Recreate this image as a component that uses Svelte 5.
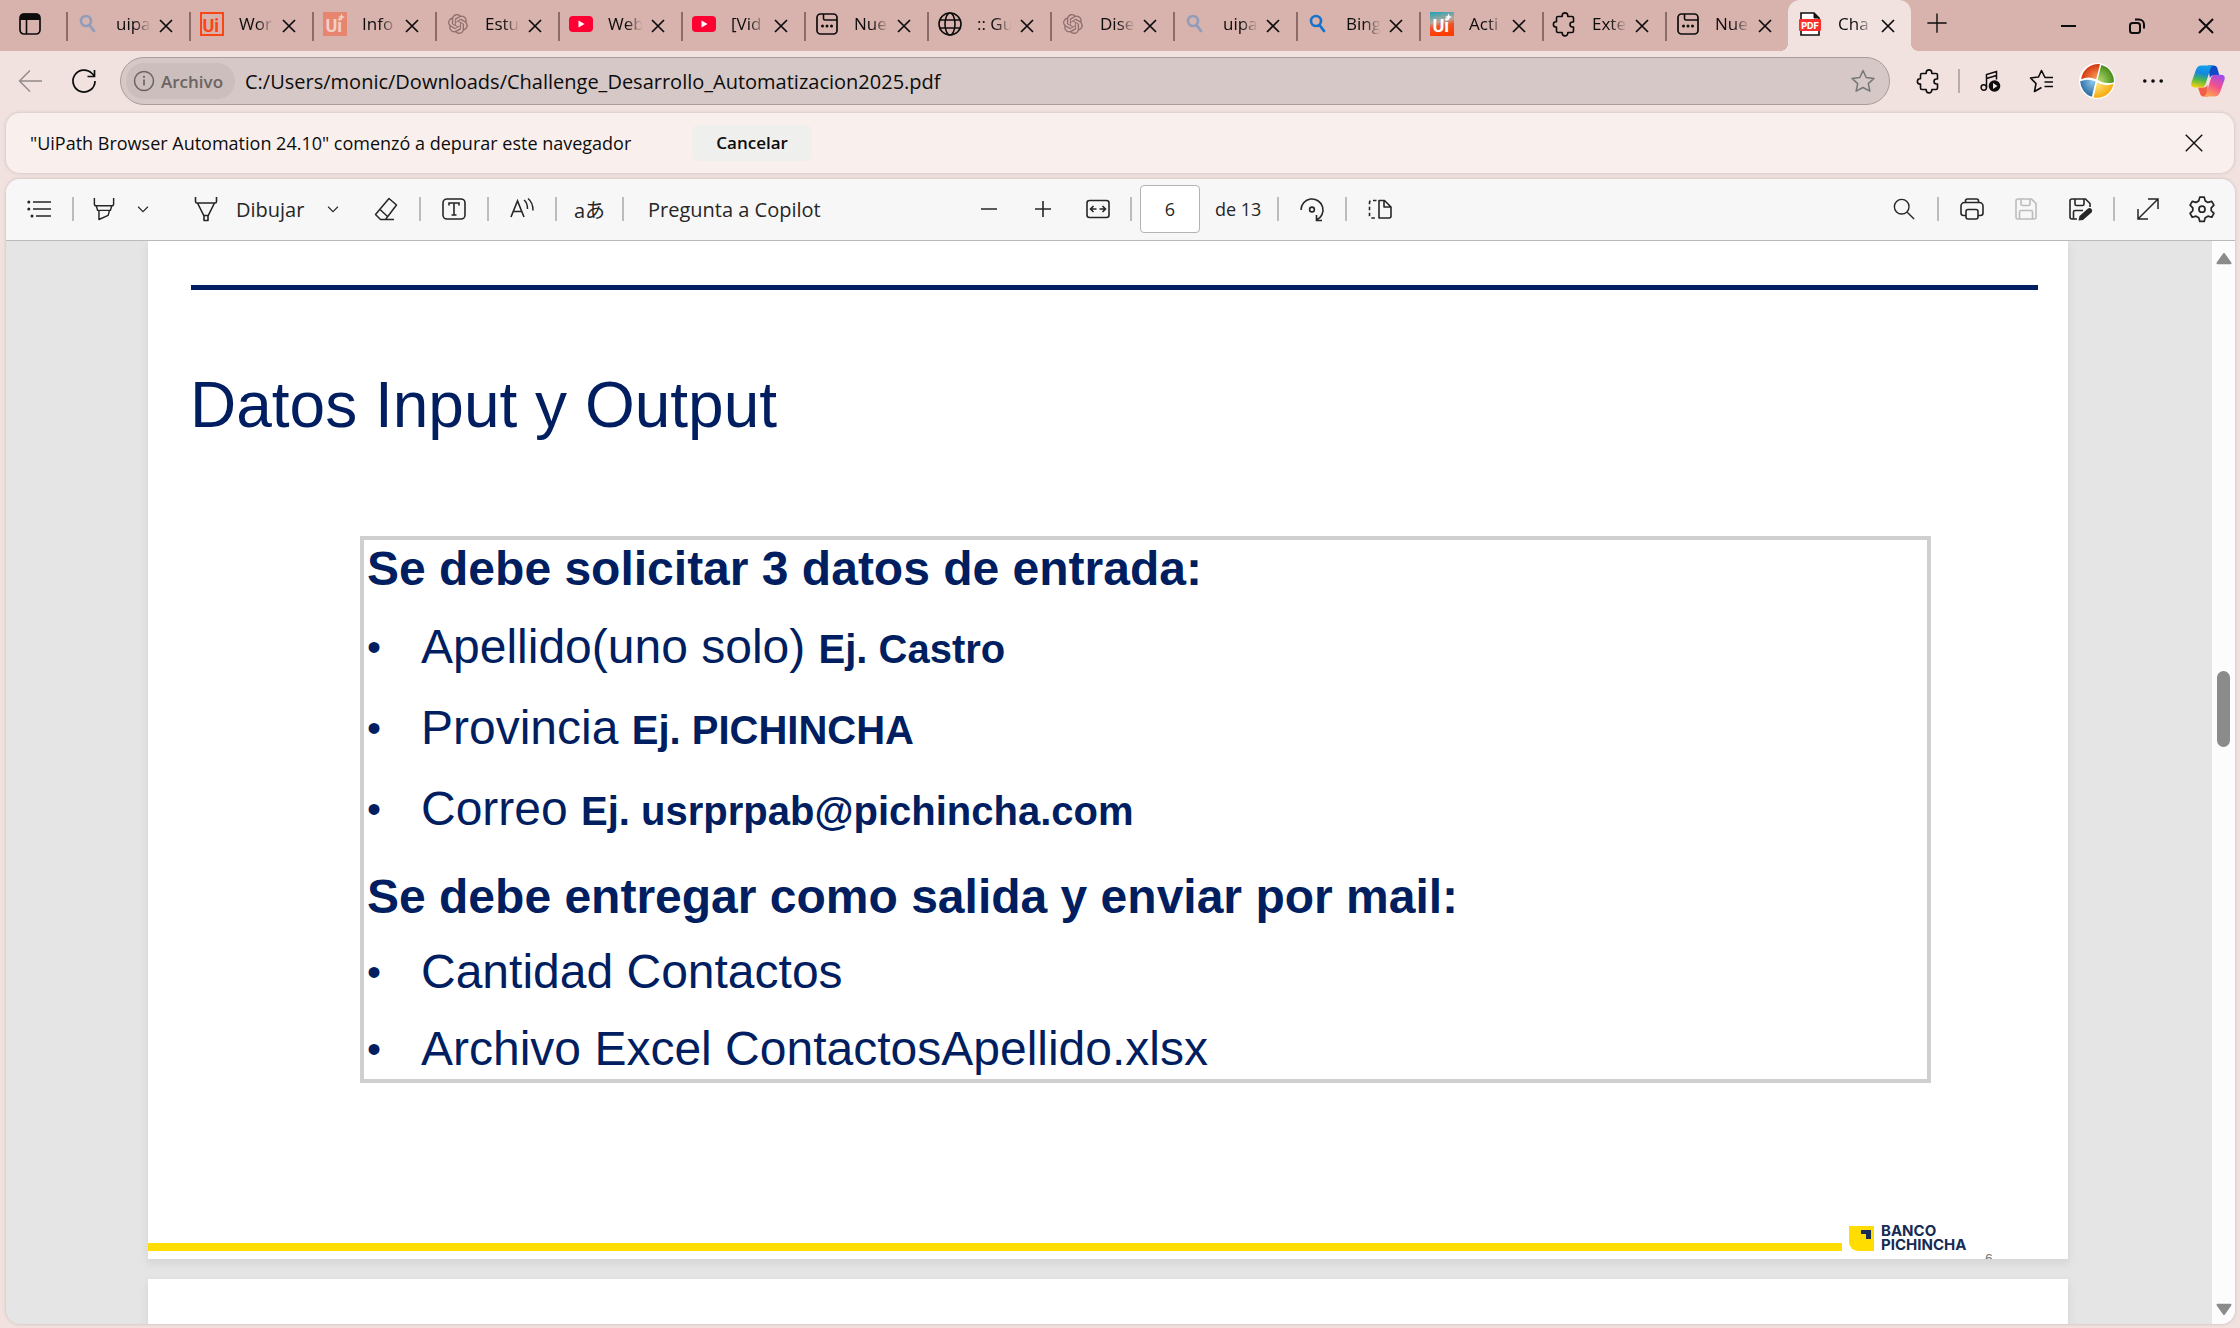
<script>
  const searchGlyph = '<circle cx="9" cy="9" r="5" fill="none" stroke="currentColor" stroke-width="2.6"/><path d="M12.500 13L17 19" stroke="currentColor" stroke-width="2.8" stroke-linecap="round"/>';
  const puzzleGlyph = '<path d="M5 4.500h4.200v-.8a2.800 2.800 0 0 1 5.600 0v.8H19a1.500 1.500 0 0 1 1.500 1.500v4h-1a2.500 2.500 0 0 0 0 5h1v4a1.500 1.500 0 0 1-1.500 1.500h-4.200v.6a2.800 2.800 0 0 1-5.600 0v-.6H5A1.500 1.500 0 0 1 3.500 19v-4H3a2.600 2.600 0 0 1 0-5.200h.5V6A1.500 1.500 0 0 1 5 4.500z" fill="none" stroke="currentColor" stroke-width="1.600" stroke-linejoin="round"/>';
  const uiText = (fill, star) =>
    `<text x="2.500" y="20" font-family="Roboto, sans-serif" font-weight="700" font-size="18" fill="${fill}">Ui</text>${star ? `<path d="M18.500 1.500l1 2.500 2.500 1-2.500 1-1 2.500-1-2.500-2.500-1 2.500-1z" fill="${fill}"/>` : ''}`;

  const icons = {
    search: searchGlyph,
    uiOutline: '<rect x="1" y="1" width="22" height="22" fill="none" stroke="#fa4616" stroke-width="2"/>' + uiText('#fa4616', false),
    uiFaded: '<rect width="24" height="24" fill="#e6866e"/>' + uiText('#f2cfc7', true),
    uiColor: '<defs><linearGradient id="uig" x1="0" y1="0" x2="0.200" y2="1"><stop offset="0" stop-color="#1aa3b8"/><stop offset="0.450" stop-color="#b9a79a"/><stop offset="0.650" stop-color="#f0512a"/><stop offset="1" stop-color="#ff3c00"/></linearGradient></defs><rect width="24" height="24" fill="url(#uig)"/>' + uiText('#fff', true),
    openai: '<path transform="translate(2 2) scale(.83)" fill="#8e6e6c" d="M22.2819 9.8211a5.9847 5.9847 0 0 0-.5157-4.9108 6.0462 6.0462 0 0 0-6.5098-2.9A6.0651 6.0651 0 0 0 4.9807 4.1818a5.9847 5.9847 0 0 0-3.9977 2.9 6.0462 6.0462 0 0 0 .7427 7.0966 5.98 5.98 0 0 0 .511 4.9107 6.051 6.051 0 0 0 6.5146 2.9001A5.9847 5.9847 0 0 0 13.2599 24a6.0557 6.0557 0 0 0 5.7718-4.2058 5.9894 5.9894 0 0 0 3.9977-2.9001 6.0557 6.0557 0 0 0-.7475-7.0729zm-9.022 12.6081a4.4755 4.4755 0 0 1-2.8764-1.0408l.1419-.0804 4.7783-2.7582a.7948.7948 0 0 0 .3927-.6813v-6.7369l2.02 1.1686a.071.071 0 0 1 .038.052v5.5826a4.504 4.504 0 0 1-4.4945 4.4944zm-9.6607-4.1254a4.4708 4.4708 0 0 1-.5346-3.0137l.142.0852 4.783 2.7582a.7712.7712 0 0 0 .7806 0l5.8428-3.3685v2.3324a.0804.0804 0 0 1-.0332.0615L9.74 19.9502a4.4992 4.4992 0 0 1-6.1408-1.6464zM2.3408 7.8956a4.485 4.485 0 0 1 2.3655-1.9728V11.6a.7664.7664 0 0 0 .3879.6765l5.8144 3.3543-2.0201 1.1685a.0757.0757 0 0 1-.071 0l-4.8303-2.7865A4.504 4.504 0 0 1 2.3408 7.872zm16.5963 3.8558L13.1038 8.364 15.1192 7.2a.0757.0757 0 0 1 .071 0l4.8303 2.7913a4.4944 4.4944 0 0 1-.6765 8.1042v-5.6772a.79.79 0 0 0-.407-.667zm2.0107-3.0231l-.142-.0852-4.7735-2.7818a.7759.7759 0 0 0-.7854 0L9.409 9.2297V6.8974a.0662.0662 0 0 1 .0284-.0615l4.8303-2.7866a4.4992 4.4992 0 0 1 6.6802 4.66zM8.3065 12.863l-2.02-1.1638a.0804.0804 0 0 1-.038-.0567V6.0742a4.4992 4.4992 0 0 1 7.3757-3.4537l-.142.0805L8.704 5.459a.7948.7948 0 0 0-.3927.6813zm1.0976-2.3654l2.602-1.4998 2.6069 1.4998v2.9994l-2.5974 1.4997-2.6067-1.4997Z"/>',
    youtube: '<rect y="4" width="24" height="16" rx="4" fill="#ff0033"/><path d="M9.500 8.500v7l6-3.500z" fill="#fff"/>',
    newtab: '<rect x="2" y="2" width="20" height="20" rx="3.500" fill="none" stroke="currentColor" stroke-width="1.700"/><path d="M8.500 2v4.500a1.500 1.500 0 0 0 1.500 1.500h12" fill="none" stroke="currentColor" stroke-width="1.600"/><circle cx="7.500" cy="14" r="1.500"/><circle cx="12" cy="14" r="1.500"/><circle cx="16.500" cy="14" r="1.500"/>',
    globe: '<g fill="none" stroke="currentColor" stroke-width="1.600"><circle cx="12" cy="12" r="11"/><ellipse cx="12" cy="12" rx="5" ry="11"/><path d="M2 8h20M2 16h20"/></g>',
    puzzle: puzzleGlyph,
    pdf: '<path d="M2 1h13l5 5v17H2z" fill="#fff" stroke="#111" stroke-width="1.600"/><path d="M15 1v5h5" fill="#111" stroke="#111"/><rect x="0" y="7" width="22" height="12" rx="1" fill="#f8312f"/><text x="11" y="16.500" text-anchor="middle" font-family="Inter, sans-serif" font-weight="800" font-size="9" fill="#fff">PDF</text>',
    close: '<path d="M6 6l12 12M18 6L6 18" stroke="currentColor" stroke-width="1.700" fill="none"/>',
    closeBig: '<path d="M3 3l18 18M21 3L3 21" stroke="currentColor" stroke-width="1.500" fill="none"/>',
    winClose: '<path d="M5 5l14 14M19 5L5 19" stroke="currentColor" stroke-width="2" fill="none"/>',
    winMin: '<path d="M5 12h15" stroke="currentColor" stroke-width="2"/>',
    winMax: '<rect x="5" y="9" width="10" height="10" rx="2.500" fill="none" stroke="currentColor" stroke-width="2"/><path d="M10 5.500h4a5 5 0 0 1 5 5v4" fill="none" stroke="currentColor" stroke-width="2"/>',
    plusBig: '<path d="M12 1.500v21M1.500 12h21" stroke="currentColor" stroke-width="1.500"/>',
    sidebar: '<rect x="2" y="2" width="20" height="20" rx="4" fill="none" stroke="currentColor" stroke-width="1.700"/><path d="M2 8V5a3.500 3.500 0 0 1 3.500-3.500h13A3.500 3.500 0 0 1 22 5v3z"/><path d="M8.500 8v14" stroke="currentColor" stroke-width="1.600"/>',
    back: '<path d="M24 12H1.500M12 1.500L1.500 12 12 22.500" fill="none" stroke="#948b8a" stroke-width="1.500"/>',
    reload: '<path d="M23 12A11 11 0 1 1 20 4.500L22.500 7M22.500 1v6.500h-7" fill="none" stroke="currentColor" stroke-width="1.700"/>',
    info: '<circle cx="12" cy="12" r="9.500" fill="none" stroke="currentColor" stroke-width="1.500"/><path d="M12 10.500v6" stroke="currentColor" stroke-width="1.700"/><circle cx="12" cy="7.800" r="1.100"/>',
    star: '<path d="M12 1.500l3.200 7 7.800.9-5.700 5.200 1.600 7.600L12 18.500l-6.900 3.700 1.600-7.600L1 9.400l7.800-.9z" fill="none" stroke="#777" stroke-width="1.500" stroke-linejoin="round"/>',
    music: '<path d="M7.500 18.500V5.500L17.500 2.500v8M7.500 9.500l10-3" fill="none" stroke="currentColor" stroke-width="1.500"/><circle cx="4.800" cy="18.500" r="2.700" fill="none" stroke="currentColor" stroke-width="1.500"/><circle cx="15.500" cy="17" r="5.800"/><path d="M14 14v6l4.500-3z" fill="#f1e2e0"/>',
    favs: '<path d="M21.500 8.500h-5.500L12.500 1.500 9.500 8 1.500 9l5.500 5.500L5.500 22.500l7-4M15.500 13H24M15.500 17.500H24M17.500 8.500H24" fill="none" stroke="currentColor" stroke-width="1.600" stroke-linejoin="round"/>',
    windows: '<defs><radialGradient id="wr" cx=".9" cy=".9" r="1"><stop offset="0" stop-color="#f9a05c"/><stop offset="1" stop-color="#cf2a06"/></radialGradient><radialGradient id="wg" cx=".1" cy=".9" r="1"><stop offset="0" stop-color="#b5dc70"/><stop offset="1" stop-color="#3c8410"/></radialGradient><radialGradient id="wb" cx=".8" cy=".1" r="1"><stop offset="0" stop-color="#8cc8ec"/><stop offset="1" stop-color="#1c5a94"/></radialGradient><radialGradient id="wy" cx=".1" cy=".1" r="1"><stop offset="0" stop-color="#ffe680"/><stop offset="1" stop-color="#f5a300"/></radialGradient></defs><circle cx="12" cy="12" r="12" fill="#fff"/><path d="M1.500 10.800A11.200 11.200 0 0 1 14 .8L11.500 10.800Q6 8.500 1.500 10.800z" fill="url(#wr)"/><path d="M14.900 1.400A11.200 11.200 0 0 1 23.300 12.800Q17 14.500 12.400 11.200z" fill="url(#wg)"/><path d="M.8 12.200Q6.200 10 11 12.400L8.600 22.500A11.200 11.200 0 0 1 .8 12.200z" fill="url(#wb)"/><path d="M12 12.800Q17 16 23 14A11.200 11.200 0 0 1 9.700 23z" fill="url(#wy)"/>',
    dots: '<circle cx="3.800" cy="12" r="1.800"/><circle cx="12" cy="12" r="1.800"/><circle cx="20.200" cy="12" r="1.800"/>',
    copilot: '<defs><linearGradient id="ca" x1=".5" y1="0" x2=".3" y2="1"><stop offset="0" stop-color="#12a0e8"/><stop offset=".35" stop-color="#1487e0"/><stop offset=".65" stop-color="#4cb848"/><stop offset="1" stop-color="#f4cf10"/></linearGradient><linearGradient id="cb" x1=".8" y1="0" x2=".3" y2="1"><stop offset="0" stop-color="#9a4df0"/><stop offset=".5" stop-color="#f2508c"/><stop offset="1" stop-color="#ffa552"/></linearGradient></defs><path d="M12 1h4q2 0 2.600 2l1.400 5h-4q-2 0-2.600 2z" fill="#1049c4"/><path d="M12 23H9q-2 0-2.600-2L5 16.500h4q2 0 2.600-2z" fill="#f2604a"/><path d="M7.500 1H16q-1.500 0-2.200 2l-3.600 11.500q-.7 2-2.700 2H3q-3.500 0-2.700-3.500L3.500 4Q4.500 1 7.500 1z" fill="url(#ca)"/><path d="M16.500 23H8.500q1.500 0 2.200-2l3.600-11.500q.7-2 2.700-2H21q3.500 0 2.700 3.500L20.500 20q-1 3-4 3z" fill="url(#cb)"/>',
    list: '<path d="M6 5h18M6 12h18M9 19h15" stroke="currentColor" stroke-width="1.600"/><circle cx="1.800" cy="5" r="1.500"/><circle cx="1.800" cy="12" r="1.500"/><circle cx="5" cy="19" r="1.500"/>',
    marker: '<path d="M1.500 0v6.500a2 2 0 0 0 2 2h17a2 2 0 0 0 2-2V0M3.500 8.500l1.500 5h14l1.500-5M6.500 13.500V23.500l10-4.500 1.500-5.500" fill="none" stroke="currentColor" stroke-width="1.600" stroke-linejoin="round"/>',
    pen: '<path d="M1.500 0v4.500A1.500 1.500 0 0 0 3 6h18a1.500 1.500 0 0 0 1.500-1.500V0M3.500 6L10 19v4.500h4V19L20.500 6M10 18.500h4" fill="none" stroke="currentColor" stroke-width="1.600" stroke-linejoin="round"/>',
    chevron: '<path d="M5.500 9l6.500 6.500L18.500 9" fill="none" stroke="currentColor" stroke-width="1.500"/>',
    eraser: '<path d="M15 1.500l7.500 6.500-11 14.500H6.500L1.500 17.500zM5.500 12l8 7.500M10 22.500h10" fill="none" stroke="currentColor" stroke-width="1.500" stroke-linejoin="round"/>',
    textbox: '<rect x="1" y="2" width="22" height="20" rx="4" fill="none" stroke="currentColor" stroke-width="1.600"/><path d="M7 8.500V6h10v2.500M12 6v12M9.500 18h5" fill="none" stroke="currentColor" stroke-width="1.600"/>',
    readAloud: '<path d="M1 20L7.500 4l6.500 16M3.500 14.500h8" fill="none" stroke="currentColor" stroke-width="1.600"/><path d="M14 3q3.500 2.500 3.500 9M18 1.500q5 4 5 12" fill="none" stroke="currentColor" stroke-width="1.500"/>',
    minus: '<path d="M4 12h16" stroke="currentColor" stroke-width="1.600"/>',
    plus: '<path d="M12 4v16M4 12h16" stroke="currentColor" stroke-width="1.600"/>',
    fit: '<rect x="1" y="3.500" width="22" height="17" rx="2.500" fill="none" stroke="currentColor" stroke-width="1.600"/><path d="M10.500 12H4.500M7.500 9l-3 3 3 3M13.500 12h6M16.500 9l3 3-3 3" fill="none" stroke="currentColor" stroke-width="1.600"/>',
    rotate: '<path d="M1 13A11 11 0 1 1 16.500 23M16.500 18v5.500h5.500" fill="none" stroke="currentColor" stroke-width="1.600"/><circle cx="12" cy="12.500" r="2.400" fill="none" stroke="currentColor" stroke-width="1.600"/>',
    pageView: '<path d="M11 3.500h5.500L23 10v9a2 2 0 0 1-2 2H11zM16 3.500V10h7" fill="none" stroke="currentColor" stroke-width="1.600" stroke-linejoin="round"/><path d="M8.500 3.500h-5a2 2 0 0 0-2 2V19a2 2 0 0 0 2 2h5" fill="none" stroke="currentColor" stroke-width="1.600" stroke-dasharray="3.500 2.500"/>',
    find: '<circle cx="9.500" cy="9.500" r="8" fill="none" stroke="currentColor" stroke-width="1.500"/><path d="M15.500 15.500L23 23" stroke="currentColor" stroke-width="1.500"/>',
    print: '<path d="M6 18.500H3.500a2.500 2.500 0 0 1-2.500-2.500V9a3.500 3.500 0 0 1 3.500-3.500h15A3.500 3.500 0 0 1 23 9v7a2.500 2.500 0 0 1-2.500 2.500H18M5.500 5.500V4a2 2 0 0 1 2-2h9a2 2 0 0 1 2 2v1.500" fill="none" stroke="currentColor" stroke-width="1.600"/><rect x="6" y="12.500" width="12" height="9.500" rx="2" fill="none" stroke="currentColor" stroke-width="1.600"/>',
    save: '<path d="M4 2h13.500L22 6.500V20a2 2 0 0 1-2 2H4a2 2 0 0 1-2-2V4a2 2 0 0 1 2-2zM7 2v5a1.500 1.500 0 0 0 1.500 1.500h6A1.500 1.500 0 0 0 16 7V2M5.500 22v-7A1.500 1.500 0 0 1 7 13.500h10a1.500 1.500 0 0 1 1.500 1.500v7" fill="none" stroke="currentColor" stroke-width="1.600"/>',
    saveAs: '<path d="M9 22H4a2 2 0 0 1-2-2V4a2 2 0 0 1 2-2h13.500L22 6.500V10M7 2v5a1.500 1.500 0 0 0 1.500 1.500h6A1.500 1.500 0 0 0 16 7V2M5.500 22v-7A1.500 1.500 0 0 1 7 13.500h8" fill="none" stroke="currentColor" stroke-width="1.600"/><path d="M10.500 23.500l1-4.500 8.500-7.500q2-1 3.500.5t0 3.500l-8.500 7.500z"/>',
    expand: '<path d="M2 22L22 2M12 2h10v10M2 12v10h10" fill="none" stroke="currentColor" stroke-width="1.500"/>',
    gear: '<path d="M10 1h4l1 3.500 2.500 1.400 3.500-1 2 3.500-2.500 2.500v2.700l2.500 2.500-2 3.500-3.500-1-2.500 1.400L14 23.500h-4L9 20l-2.500-1.400-3.500 1-2-3.500 2.500-2.500v-2.700L1 8.400l2-3.500 3.500 1L9 4.500z" fill="none" stroke="currentColor" stroke-width="1.600" stroke-linejoin="round"/><circle cx="12" cy="12.200" r="2.800" fill="none" stroke="currentColor" stroke-width="1.600"/>',
    triUp: '<path d="M12 5.500L20.500 17.500h-17z" stroke="currentColor" stroke-width="3" stroke-linejoin="round"/>',
    triDown: '<path d="M12 18.500L20.500 6.500h-17z" stroke="currentColor" stroke-width="3" stroke-linejoin="round"/>'
  };

  const tabs = [
    { icon: 'search', label: 'uipa', tone: 'faded' },
    { icon: 'uiOutline', label: 'Wor' },
    { icon: 'uiFaded', label: 'Info' },
    { icon: 'openai', label: 'Estu' },
    { icon: 'youtube', label: 'Web' },
    { icon: 'youtube', label: '[Vid' },
    { icon: 'newtab', label: 'Nue' },
    { icon: 'globe', label: ':: Gu' },
    { icon: 'openai', label: 'Dise' },
    { icon: 'search', label: 'uipa', tone: 'faded' },
    { icon: 'search', label: 'Bing', tone: 'blue' },
    { icon: 'uiColor', label: 'Acti' },
    { icon: 'puzzle', label: 'Exte' },
    { icon: 'newtab', label: 'Nue' },
    { icon: 'pdf', label: 'Cha', active: true }
  ];

  const inputs = [
    { name: 'Apellido(uno solo)', example: 'Ej. Castro' },
    { name: 'Provincia', example: 'Ej. PICHINCHA' },
    { name: 'Correo', example: 'Ej. usrprpab@pichincha.com' }
  ];
  const outputs = ['Cantidad Contactos', 'Archivo Excel ContactosApellido.xlsx'];

  let url = $state('C:/Users/monic/Downloads/Challenge_Desarrollo_Automatizacion2025.pdf');
  let page = $state('6');
</script>

{#snippet icon(name, size = '')}
  <svg class="icon {size}" viewBox="0 0 24 24" fill="currentColor" aria-hidden="true">{@html icons[name]}</svg>
{/snippet}

<div class="window">
  <header class="strip">
    <button class="workspace" aria-label="Menú de pestañas">{@render icon('sidebar')}</button>
    <nav class="tabs">
      {#each tabs as tab}
        <div class="tab" class:active={tab.active}>
          <span class="fav {tab.tone ?? ''}">{@render icon(tab.icon)}</span>
          <span class="label">{tab.label}</span>
          <button class="x" aria-label="Cerrar pestaña">{@render icon('close')}</button>
        </div>
      {/each}
    </nav>
    <button class="new" aria-label="Nueva pestaña">{@render icon('plusBig', 'i22')}</button>
    <div class="controls">
      <button aria-label="Minimizar">{@render icon('winMin')}</button>
      <button aria-label="Restaurar">{@render icon('winMax')}</button>
      <button aria-label="Cerrar">{@render icon('winClose')}</button>
    </div>
  </header>

  <div class="nav">
    <button class="back" aria-label="Atrás">{@render icon('back')}</button>
    <button class="reload" aria-label="Actualizar">{@render icon('reload')}</button>
    <div class="address">
      <button class="chip">{@render icon('info')}Archivo</button>
      <input aria-label="Dirección" bind:value={url} spellcheck="false" />
      <button aria-label="Favorito">{@render icon('star')}</button>
    </div>
    <div class="extras">
      <button aria-label="Extensiones">{@render icon('puzzle')}</button>
      <span class="bar"></span>
      <div class="shortcuts">
        <button aria-label="Multimedia">{@render icon('music')}</button>
        <button aria-label="Favoritos">{@render icon('favs')}</button>
        <button aria-label="Perfil">{@render icon('windows', 'i36')}</button>
        <button aria-label="Más">{@render icon('dots')}</button>
        <button aria-label="Copilot">{@render icon('copilot', 'i34')}</button>
      </div>
    </div>
  </div>

  <section class="notice">
    <p>"UiPath Browser Automation 24.10" comenzó a depurar este navegador</p>
    <button class="cancel">Cancelar</button>
    <button class="dismiss" aria-label="Cerrar aviso">{@render icon('closeBig', 'i22')}</button>
  </section>

  <main class="viewer">
    <div class="tools">
      <div class="group">
        <button class="cell" aria-label="Contenido">{@render icon('list')}</button>
        <span class="sep"></span>
        <button class="cell mid" aria-label="Resaltar">{@render icon('marker', 'i22')}</button>
        <button class="chev" aria-label="Opciones de resaltado">{@render icon('chevron', 'i18')}</button>
        <button class="draw">{@render icon('pen')}Dibujar</button>
        <button class="chev" aria-label="Opciones de dibujo">{@render icon('chevron', 'i18')}</button>
        <button class="cell erase" aria-label="Borrar">{@render icon('eraser')}</button>
        <span class="sep"></span>
        <button class="cell" aria-label="Agregar texto">{@render icon('textbox')}</button>
        <span class="sep"></span>
        <button class="cell" aria-label="Leer en voz alta">{@render icon('readAloud')}</button>
        <span class="sep"></span>
        <button class="cell translate" aria-label="Traducir">aあ</button>
        <span class="sep"></span>
        <button class="ask">Pregunta a Copilot</button>
      </div>
      <div class="group center">
        <button class="cell small" aria-label="Alejar">{@render icon('minus')}</button>
        <button class="cell small" aria-label="Acercar">{@render icon('plus')}</button>
        <button class="cell fit" aria-label="Ajustar al ancho">{@render icon('fit')}</button>
        <span class="sep"></span>
        <label class="pager"><input aria-label="Página" bind:value={page} /><span>de 13</span></label>
        <span class="sep"></span>
        <button class="cell" aria-label="Girar">{@render icon('rotate')}</button>
        <span class="sep"></span>
        <button class="cell" aria-label="Vista de página">{@render icon('pageView')}</button>
      </div>
      <div class="group right">
        <button class="cell" aria-label="Buscar">{@render icon('find', 'i22')}</button>
        <span class="sep"></span>
        <button class="cell small" aria-label="Imprimir">{@render icon('print')}</button>
        <button class="cell small off" aria-label="Guardar" disabled>{@render icon('save')}</button>
        <button class="cell small" aria-label="Guardar como">{@render icon('saveAs')}</button>
        <span class="sep"></span>
        <button class="cell" aria-label="Pantalla completa">{@render icon('expand')}</button>
        <button class="cell gear" aria-label="Configuración">{@render icon('gear', 'i26')}</button>
      </div>
    </div>

    <div class="body">
      <div class="canvas">
        <article class="sheet">
          <hr />
          <h1>Datos Input y Output</h1>
          <div class="box">
            <h2>Se debe solicitar 3 datos de entrada:</h2>
            <ul class="in">
              {#each inputs as item}
                <li><i>•</i><span>{item.name} <b>{item.example}</b></span></li>
              {/each}
            </ul>
            <h2>Se debe entregar como salida y enviar por mail:</h2>
            <ul class="out">
              {#each outputs as item}
                <li><i>•</i><span>{item}</span></li>
              {/each}
            </ul>
          </div>
          <footer>
            <span class="yellow"></span>
            <svg class="mark" viewBox="0 0 25 25" aria-hidden="true"><path d="M0 0h25v25H9a9 9 0 0 1-9-9z" fill="#ffdd00"/><path d="M12 4h10v9h-5V8h-5z" fill="#172b54"/></svg>
            <strong>BANCO<br />PICHINCHA</strong>
            <small>6</small>
          </footer>
        </article>
        <article class="sheet next"></article>
      </div>
      <div class="scroll" aria-hidden="true">
        {@render icon('triUp', 'i18')}
        <span class="above"></span>
        <span class="thumb"></span>
        <span class="below"></span>
        {@render icon('triDown', 'i18')}
      </div>
    </div>
  </main>
</div>

<style>
  :global(body) { background: #f1e2e0; }
  * { box-sizing: border-box; }
  .window { display: flex; flex-direction: column; height: 100vh; overflow: hidden; padding-bottom: 4px; font-family: "Open Sans", "Noto Sans", sans-serif; color: #0c0c0c; }
  button { display: flex; align-items: center; justify-content: center; flex: none; padding: 0; border: 0; background: none; color: inherit; font: inherit; }
  input { min-width: 0; border: 0; background: none; color: inherit; font: inherit; outline: 0; }
  .icon { display: block; flex: none; width: 24px; height: 24px; overflow: visible; }
  .i18 { width: 18px; height: 18px; }
  .i22 { width: 22px; height: 22px; }
  .i26 { width: 26px; height: 26px; }
  .i34 { width: 34px; height: 34px; }
  .i36 { width: 36px; height: 36px; }

  .strip { display: flex; flex: none; height: 51px; background: #d8b2ad; }
  .workspace { width: 66px; padding-right: 6px; padding-bottom: 3px; }
  .tabs { display: flex; min-width: 0; }
  .tab { position: relative; display: flex; align-items: center; flex: 0 1 123px; width: 123px; padding: 0 10px 3px 11px; }
  .tab:not(.active)::before { content: ""; position: absolute; left: 0; top: 12px; width: 2px; height: 29px; background: #8b6c69; }
  .active { background: #f1e2e0; border-radius: 12px 12px 0 0; }
  .active::before, .active::after { content: ""; position: absolute; bottom: 0; width: 8px; height: 8px; }
  .active::before { right: 100%; background: radial-gradient(circle at 0 0, #d8b2ad 8px, #f1e2e0 8px); }
  .active::after { left: 100%; background: radial-gradient(circle at 100% 0, #d8b2ad 8px, #f1e2e0 8px); }
  .fav { width: 24px; }
  .faded { color: #8f9dbb; }
  .blue { color: #1673cc; }
  .label { flex: none; width: 36px; margin-left: 15px; overflow: hidden; font-size: 17px; line-height: 24px; white-space: nowrap; -webkit-mask-image: linear-gradient(90deg, #000 50%, transparent 96%); mask-image: linear-gradient(90deg, #000 50%, transparent 96%); }
  .x { margin-left: 2px; padding-top: 3px; }
  .new { width: 52px; padding-bottom: 5px; }
  .controls { display: flex; margin-left: auto; }
  .controls button { width: 69px; }

  .nav { display: flex; flex: none; align-items: center; height: 62px; padding: 0 15px 2px 18px; }
  .reload { margin: 0 24px 0 30px; }
  .address { display: flex; flex: 1; align-items: center; height: 48px; padding: 0 14px 0 5px; border: 1px solid #aa9c9a; border-radius: 24px; background: #d6c8c6; }
  .address input { flex: 1; margin: 0 10px; padding: 0; font-size: 20px; }
  .chip { gap: 5px; height: 36px; padding: 0 12px 0 6px; border-radius: 18px; background: #ccbebc; color: #6b6463; font-size: 17px; font-weight: 600; }
  .extras { display: flex; align-items: center; margin-left: 27px; }
  .bar { width: 2px; height: 24px; margin: 0 19px 0 17px; background: #b9adab; }
  .shortcuts { display: flex; align-items: center; gap: 26px; }

  .notice { display: flex; flex: none; align-items: center; height: 60px; margin: 0 6px; padding: 0 29px 1px 24px; border-radius: 14px; background: #f9f0ee; box-shadow: 0 0 3px 1px #d9c9c7; }
  .notice p { margin: 0; font-size: 18px; }
  .cancel { height: 36px; margin-left: 61px; padding: 0 24px; border-radius: 6px; background: #efefee; font-size: 17px; font-weight: 600; }
  .dismiss { margin-left: auto; }

  .viewer { display: flex; flex: 1; flex-direction: column; min-height: 0; margin: 6px 5px 0 6px; overflow: hidden; border-radius: 14px; background: #e5e5e5; box-shadow: 0 0 3px 1px #d9c9c7; }
  .tools { display: flex; flex: none; height: 62px; padding-bottom: 1px; border-bottom: 1px solid #bababa; background: #f7f7f7; color: #262626; font-size: 20px; }
  .group { display: flex; align-items: center; }
  .center { margin-left: 140px; }
  .right { margin-left: auto; padding-right: 12px; }
  .sep { flex: none; width: 2px; height: 24px; background: #bcbcbc; }
  .cell { width: 66px; height: 48px; }
  .mid { width: 60px; }
  .small { width: 54px; }
  .fit { width: 56px; margin-right: 4px; }
  .right .sep:not(:first-of-type) { margin-left: 6px; }
  .right .sep:first-of-type { margin-right: 6px; }
  .gear { width: 42px; }
  .off { color: #bcbcbc; }
  .chev { width: 18px; height: 48px; }
  .draw { justify-content: flex-start; gap: 18px; width: 172px; padding-left: 42px; }
  .erase { margin-left: 11px; }
  .translate { width: 65px; font-family: "Open Sans", "Noto Sans CJK JP", sans-serif; font-size: 20px; }
  .ask { justify-content: flex-start; width: 198px; padding-left: 24px; white-space: nowrap; }
  .pager { display: flex; align-items: center; gap: 15px; width: 145px; padding-left: 8px; font-size: 18px; white-space: nowrap; }
  .pager input { width: 60px; height: 48px; padding: 0; border: 1px solid #b4b4b4; border-radius: 4px; background: #fff; text-align: center; }

  .body { display: flex; flex: 1; min-height: 0; }
  .canvas { display: flex; flex: 1; flex-direction: column; gap: 20px; padding: 0 144px 0 142px; overflow: hidden; }
  .sheet { display: flow-root; flex: none; background: #fff; box-shadow: 0 4px 8px 1px #d6d6d6; color: #001e60; font-family: "Liberation Sans", sans-serif; }
  .next { height: 400px; }
  hr { height: 5px; margin: 44px 30px 0 43px; border: 0; background: #001e60; }
  h1 { margin: 79px 0 95px 42px; font-size: 64px; font-weight: 400; line-height: 72px; }
  .box { margin: 0 137px 0 212px; padding: 1px 3px 2px; border: 4px solid #cfcfcf; font-size: 48px; line-height: 56px; }
  h2 { margin: 0; font-size: 48px; line-height: 56px; }
  ul { display: flex; flex-direction: column; margin: 22px 0 32px; padding: 0; list-style: none; }
  .in { gap: 25px; }
  .out { gap: 21px; margin: 19px 0 0; }
  li { display: flex; height: 56px; }
  li i { width: 54px; font-size: 40px; font-style: normal; }
  b { font-size: 40px; line-height: 1; }
  footer { display: flex; height: 39px; margin-top: 137px; overflow: hidden; }
  .yellow { flex: 1; height: 8px; margin: 23px 7px 0 0; background: #ffdd00; }
  .mark { width: 25px; height: 25px; margin-top: 6px; }
  strong { width: 104px; margin: 4px 0 0 7px; color: #172b54; font-family: Inter, sans-serif; font-size: 15px; line-height: 14px; }
  small { width: 83px; padding-top: 31px; color: #777; font-size: 14px; line-height: 16px; }

  .scroll { display: flex; flex-direction: column; align-items: center; width: 23px; padding: 9px 0 6px; background: #fcfcfc; color: #8b8b8b; }
  .thumb { width: 13px; height: 76px; border-radius: 7px; background: #8b8b8b; }
  .above { flex: 403; }
  .below { flex: 553; }
</style>
